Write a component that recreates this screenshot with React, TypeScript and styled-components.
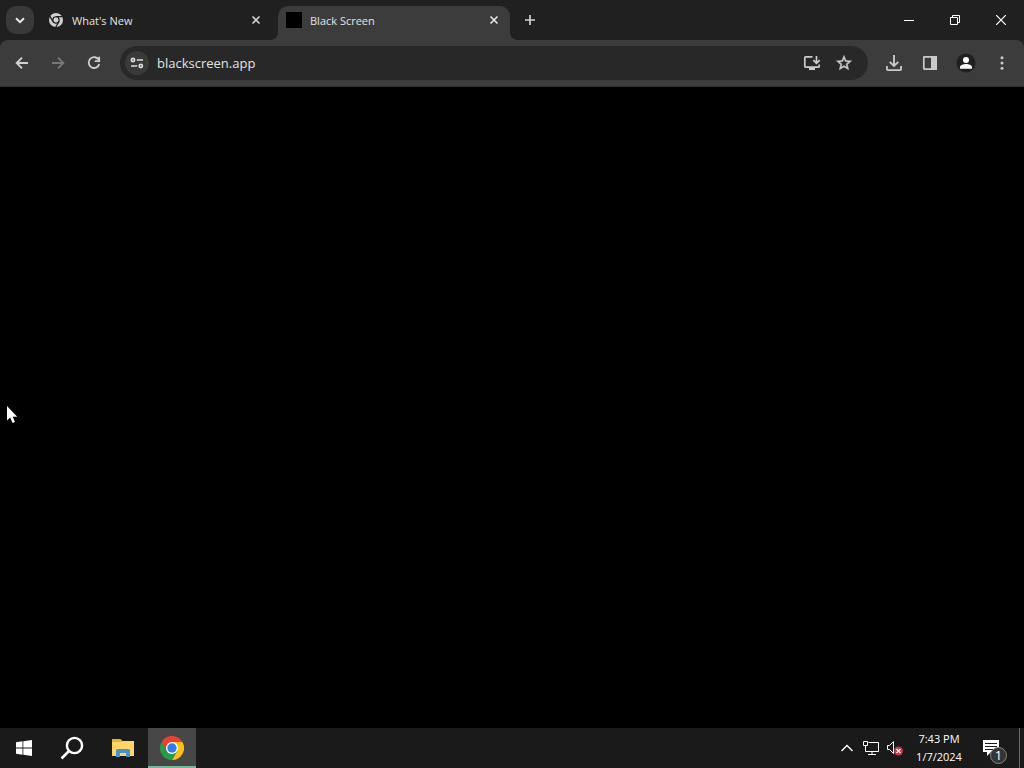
import React from "react";
import styled, { createGlobalStyle } from "styled-components";

const GlobalStyle = createGlobalStyle`
  * { box-sizing: border-box; }
  body {
    margin: 0;
    background: #000;
    color: #e3e3e3;
    font-family: "Open Sans", "Noto Sans", sans-serif;
    overflow: hidden;
  }
  button, input { font: inherit; color: inherit; border: 0; padding: 0; background: none; }
  svg { display: block; flex: none; }
`;

const Desktop = styled.div`
  min-height: 100vh;
  display: flex;
  flex-direction: column;
`;

const TabStrip = styled.header`
  height: 40px;
  display: flex;
  align-items: flex-end;
  gap: 6px;
  padding-left: 6px;
  background: #202020;
`;

const StripButton = styled.button<{ $filled?: boolean }>`
  width: 28px;
  height: 28px;
  margin-bottom: 6px;
  display: grid;
  place-items: center;
  border-radius: 10px;
  background: ${(p) => (p.$filled ? "#393939" : "transparent")};
`;

const Tab = styled.div<{ $active?: boolean }>`
  position: relative;
  width: 232px;
  height: 34px;
  padding: 0 8px 6px;
  display: flex;
  align-items: center;
  gap: 8px;
  border-radius: 10px 10px 0 0;
  background: ${(p) => (p.$active ? "#3c3c3c" : "transparent")};
  &::before, &::after {
    content: "";
    display: ${(p) => (p.$active ? "block" : "none")};
    position: absolute;
    bottom: 0;
    width: 8px;
    height: 8px;
  }
  &::before {
    right: 100%;
    background: radial-gradient(circle at 0 0, transparent 8px, #3c3c3c 8px);
  }
  &::after {
    left: 100%;
    background: radial-gradient(circle at 100% 0, transparent 8px, #3c3c3c 8px);
  }
`;

const TabTitle = styled.button`
  flex: 1;
  padding-top: 2px;
  font-size: 11px;
  line-height: 16px;
  text-align: left;
  white-space: nowrap;
`;

const TabClose = styled.button`
  width: 16px;
  height: 16px;
  display: grid;
  place-items: center;
`;

const BlackFavicon = styled.span`
  width: 16px;
  height: 16px;
  background: #000;
`;

const WindowControls = styled.div`
  margin-left: auto;
  align-self: stretch;
  display: flex;
`;

const WindowButton = styled.button`
  width: 46px;
  display: grid;
  place-items: center;
`;

const ToolbarBack = styled.div`
  background: #202020;
`;

const Toolbar = styled.nav`
  display: flex;
  align-items: center;
  padding: 6px 4px;
  background: #3c3c3c;
  border-bottom: 1px solid #303030;
  border-radius: 8px 8px 0 0;
`;

const ToolButton = styled.button`
  width: 36px;
  height: 34px;
  display: grid;
  place-items: center;
`;

const AddressBar = styled.form`
  flex: 1;
  min-width: 0;
  height: 34px;
  margin: 0 8px;
  padding: 0 8px 0 5px;
  display: flex;
  align-items: center;
  border-radius: 17px;
  background: #282828;
`;

const SiteInfo = styled.button`
  width: 24px;
  height: 24px;
  display: grid;
  place-items: center;
  border-radius: 50%;
  background: #3a3a3a;
`;

const AddressInput = styled.input`
  flex: 1;
  min-width: 0;
  margin-left: 8px;
  font-size: 13px;
  line-height: 20px;
  outline: none;
`;

const AddressAction = styled.button`
  width: 32px;
  height: 32px;
  display: grid;
  place-items: center;
`;

const Page = styled.main`
  flex: 1;
  background: #000;
`;

const Pointer = styled.svg`
  position: absolute;
  left: 6px;
  top: 405px;
`;

const Taskbar = styled.footer`
  height: 40px;
  display: flex;
  background: #1a1a1a;
`;

const TaskButton = styled.button<{ $active?: boolean }>`
  width: 48px;
  height: 40px;
  padding-top: ${(p) => (p.$active ? "2px" : "0")};
  display: grid;
  place-items: center;
  background: ${(p) => (p.$active ? "#474747" : "transparent")};
  border-bottom: ${(p) => (p.$active ? "2px solid #78b79c" : "0")};
`;

const PinnedApps = styled.div`
  display: flex;
  gap: 1px;
  margin-left: 3px;
`;

const Tray = styled.div`
  margin-left: auto;
  display: flex;
  align-items: stretch;
`;

const TrayButton = styled.button`
  width: 24px;
  display: grid;
  place-items: center;
`;

const Clock = styled.button`
  width: 64px;
  font-size: 11px;
  line-height: 18px;
  color: #fff;
  text-align: center;
  white-space: nowrap;
`;

const ClockLine = styled.span`
  display: block;
`;

const Notifications = styled.button`
  width: 48px;
  display: grid;
  place-items: center;
`;

const ShowDesktop = styled.button`
  width: 5px;
  border-left: 1px solid #6b6b6b;
`;

type StrokeProps = { size: number; d: string; color?: string; width?: number };

const StrokeIcon = ({ size, d, color = "#d0d0d0", width = 2 }: StrokeProps) => (
  <svg width={size} height={size} viewBox={`0 0 ${size} ${size}`} fill="none" stroke={color} strokeWidth={width}>
    <path d={d} />
  </svg>
);

const ChromeMono = () => (
  <svg width="16" height="16" viewBox="0 0 16 16">
    <circle cx="8" cy="8" r="7" fill="#d0d0d0" />
    <circle cx="8" cy="8" r="3.1" fill="#d0d0d0" stroke="#202020" strokeWidth="1.4" />
    <path d="M8 4.6H14.5M5.1 9.7 1.8 4.2M10.9 9.7 7.8 15" stroke="#202020" strokeWidth="1.3" />
    <circle cx="8" cy="8" r="2.4" fill="#d0d0d0" />
  </svg>
);

const ChromeColor = () => (
  <svg width="24" height="24" viewBox="0 0 24 24">
    <path d="M12 12 1.6 6A12 12 0 0 1 22.4 6Z" fill="#e94235" />
    <path d="M12 6H22.4A12 12 0 0 1 12 24L17.2 15Z" fill="#fbc116" />
    <path d="M1.6 6A12 12 0 0 0 12 24L17.2 15 12 14 6.8 15Z" fill="#299b49" />
    <path d="M1.6 6 6.8 15 12 6Z" fill="#e94235" />
    <path d="M1.6 6 6.8 15 8 19 0 14Z" fill="#299b49" />
    <circle cx="12" cy="12" r="6" fill="#fff" />
    <circle cx="12" cy="12" r="4.7" fill="#2f7de6" />
  </svg>
);

export default function App() {
  return (
    <Desktop>
      <GlobalStyle />
      <TabStrip>
        <StripButton $filled aria-label="Search tabs">
          <StrokeIcon size={12} d="M2 4.2 6 8.2 10 4.2" color="#e8e8e8" />
        </StripButton>
        <Tab>
          <ChromeMono />
          <TabTitle>What's New</TabTitle>
          <TabClose aria-label="Close What's New">
            <StrokeIcon size={10} d="M1.5 1.5 8.5 8.5M8.5 1.5 1.5 8.5" width={1.6} />
          </TabClose>
        </Tab>
        <Tab $active>
          <BlackFavicon />
          <TabTitle>Black Screen</TabTitle>
          <TabClose aria-label="Close Black Screen">
            <StrokeIcon size={10} d="M1.5 1.5 8.5 8.5M8.5 1.5 1.5 8.5" color="#e8e8e8" width={1.6} />
          </TabClose>
        </Tab>
        <StripButton aria-label="New tab">
          <StrokeIcon size={12} d="M6 1V11M1 6H11" width={1.7} />
        </StripButton>
        <WindowControls>
          <WindowButton aria-label="Minimize">
            <StrokeIcon size={10} d="M0 5.5H10" color="#fff" width={1} />
          </WindowButton>
          <WindowButton aria-label="Restore">
            <StrokeIcon size={10} d="M.5 2.5H7.5V9.5H.5ZM2.5 2.5V.5H9.5V7.5H7.5" color="#fff" width={1} />
          </WindowButton>
          <WindowButton aria-label="Close window">
            <StrokeIcon size={10} d="M0 0 10 10M10 0 0 10" color="#fff" width={1.2} />
          </WindowButton>
        </WindowControls>
      </TabStrip>

      <ToolbarBack>
        <Toolbar>
          <ToolButton aria-label="Back">
            <StrokeIcon size={16} d="M14 8H3M8 2.7 2.7 8 8 13.3" width={1.9} />
          </ToolButton>
          <ToolButton aria-label="Forward">
            <StrokeIcon size={16} d="M2 8H13M8 2.7 13.3 8 8 13.3" color="#777" width={1.9} />
          </ToolButton>
          <ToolButton aria-label="Reload">
            <svg width="16" height="16" viewBox="0 0 16 16" fill="none" stroke="#d0d0d0" strokeWidth="1.8">
              <path d="M12.9 5.1A5.4 5.4 0 1 0 13.3 9" />
              <path d="M13.2 1.8V6.2H8.8" />
            </svg>
          </ToolButton>
          <AddressBar onSubmit={(e) => e.preventDefault()}>
            <SiteInfo type="button" aria-label="View site information">
              <svg width="14" height="12" viewBox="0 0 14 12" fill="none" stroke="#dcdcdc" strokeWidth="1.7">
                <circle cx="3" cy="3" r="1.6" />
                <path d="M6.8 3H13M1 9H7.2" />
                <circle cx="10.8" cy="9" r="1.6" />
              </svg>
            </SiteInfo>
            <AddressInput aria-label="Address" defaultValue="blackscreen.app" spellCheck={false} />
            <AddressAction type="button" aria-label="Install app">
              <svg width="18" height="16" viewBox="0 0 18 16" fill="none" stroke="#cbcbcb" strokeWidth="1.7">
                <path d="M9.5 1.8H2.8Q1.8 1.8 1.8 2.8V11.2Q1.8 12.2 2.8 12.2H15.2Q16.2 12.2 16.2 11.2V9.5" />
                <path d="M13.5 1V8M10.3 5.2 13.5 8.3 16.7 5.2" />
                <path d="M6 12H12V15H6Z" fill="#cbcbcb" stroke="none" />
              </svg>
            </AddressAction>
            <AddressAction type="button" aria-label="Bookmark this tab">
              <svg width="18" height="18" viewBox="0 0 24 24" fill="#cbcbcb" stroke="#cbcbcb" strokeWidth=".7">
                <path d="M22 9.24l-7.19-.62L12 2 9.19 8.63 2 9.24l5.46 4.73L5.82 21 12 17.27 18.18 21l-1.63-7.03L22 9.24zM12 15.4l-3.76 2.27 1-4.28-3.32-2.88 4.38-.38L12 6.1l1.71 4.04 4.38.38-3.32 2.88 1 4.28L12 15.4z" />
              </svg>
            </AddressAction>
          </AddressBar>
          <ToolButton aria-label="Downloads">
            <StrokeIcon size={18} d="M9 1V12M4.7 7.8 9 12 13.3 7.8M1.9 12V15.1Q1.9 16.1 2.9 16.1H15.1Q16.1 16.1 16.1 15.1V12" color="#cbcbcb" width={1.8} />
          </ToolButton>
          <ToolButton aria-label="Side panel">
            <svg width="16" height="16" viewBox="0 0 16 16">
              <rect x="1.8" y="1.8" width="12.4" height="12.4" rx=".6" fill="none" stroke="#cbcbcb" strokeWidth="1.7" />
              <path d="M9 1H15V15H9Z" fill="#cbcbcb" />
            </svg>
          </ToolButton>
          <ToolButton aria-label="Profile">
            <svg width="20" height="20" viewBox="0 0 20 20">
              <circle cx="10" cy="10" r="9.5" fill="#202020" />
              <circle cx="10" cy="6.9" r="3" fill="#fff" />
              <path d="M4 15.8V14.2C4 11.8 7.5 11 10 11S16 11.8 16 14.2V15.8Z" fill="#fff" />
            </svg>
          </ToolButton>
          <ToolButton aria-label="Menu">
            <svg width="16" height="16" viewBox="0 0 16 16" fill="#cbcbcb">
              <circle cx="8" cy="2.8" r="1.5" />
              <circle cx="8" cy="8" r="1.5" />
              <circle cx="8" cy="13.2" r="1.5" />
            </svg>
          </ToolButton>
        </Toolbar>
      </ToolbarBack>

      <Page />
      <Pointer width="12" height="19" viewBox="0 0 12 19" aria-hidden="true">
        <path d="M1 1V15.5L4.2 12.5 6.6 18 9 17 6.7 11.7H11.2Z" fill="#fff" />
      </Pointer>

      <Taskbar>
        <TaskButton aria-label="Start">
          <svg width="16" height="16" viewBox="0 0 16 16" fill="#fff">
            <path d="M0 2.3 6.5 1.3V7.6H0ZM7.3 1.2 16 0V7.6H7.3ZM0 8.4H6.5V14.7L0 13.8ZM7.3 8.4H16V16L7.3 14.8Z" />
          </svg>
        </TaskButton>
        <TaskButton aria-label="Search">
          <svg width="24" height="24" viewBox="0 0 24 24" fill="none" stroke="#fff" strokeWidth="2.4">
            <circle cx="14.5" cy="9.5" r="7.6" />
            <path d="M9 15 1.5 22.5" strokeWidth="2.6" />
          </svg>
        </TaskButton>
        <PinnedApps>
          <TaskButton aria-label="File Explorer">
            <svg width="22" height="20" viewBox="0 0 22 20">
              <path d="M0 1H8.5L10.5 3H22V18H0Z" fill="#e9ae38" />
              <path d="M0 4H9L11 3H22V18H0Z" fill="#ffd567" />
              <path d="M4 19V12.5Q4 11 5.5 11H16.5Q18 11 18 12.5V19H14V15H8V19Z" fill="#4693ca" />
            </svg>
          </TaskButton>
          <TaskButton $active aria-label="Google Chrome">
            <ChromeColor />
          </TaskButton>
        </PinnedApps>
        <Tray>
          <TrayButton aria-label="Show hidden icons">
            <StrokeIcon size={14} d="M1.5 10 7 4.5 12.5 10" color="#fff" width={1.4} />
          </TrayButton>
          <TrayButton aria-label="Network">
            <svg width="18" height="16" viewBox="0 0 18 16" fill="none" stroke="#fff">
              <path d="M6.5 2.5H16.5V11.5H3.5V6M10 11.5V14M6 14.5H14" />
              <path d="M1.5 1.5H5.5V5.5H1.5Z" />
            </svg>
          </TrayButton>
          <TrayButton aria-label="Volume muted">
            <svg width="18" height="18" viewBox="0 0 18 18">
              <path d="M1.5 6.5H3.5L7.5 2.5V14.5L3.5 10.5H1.5Z" fill="none" stroke="#fff" />
              <circle cx="12.5" cy="12" r="4.5" fill="#c93448" />
              <path d="M10.5 10 14.5 14M14.5 10 10.5 14" stroke="#fff" strokeWidth="1.2" />
            </svg>
          </TrayButton>
          <Clock>
            <ClockLine>7:43 PM</ClockLine>
            <ClockLine>1/7/2024</ClockLine>
          </Clock>
          <Notifications aria-label="Notifications, 1 new">
            <svg width="32" height="32" viewBox="0 0 32 32">
              <path d="M4 8H20V20H12L8 24V20H4Z" fill="#fff" />
              <path d="M6 11.5H18M6 14.5H18M6 17.5H14" stroke="#1a1a1a" />
              <circle cx="19.5" cy="23.5" r="8" fill="#353535" stroke="#858585" />
              <text x="19.5" y="28" textAnchor="middle" fontSize="13" fill="#fff">1</text>
            </svg>
          </Notifications>
          <ShowDesktop aria-label="Show desktop" />
        </Tray>
      </Taskbar>
    </Desktop>
  );
}
